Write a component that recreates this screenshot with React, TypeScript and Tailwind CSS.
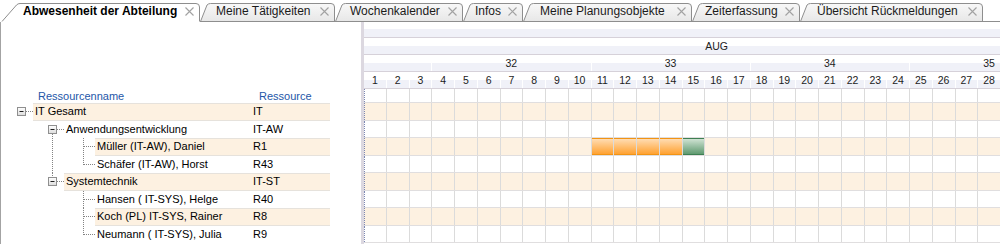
import React from "react";

type Tab = { label: string; w: number; wc: string; pl: string; active?: boolean };

const TABS: Tab[] = [
  { label: "Abwesenheit der Abteilung", w: 200, wc: "w-[200px]", pl: "pl-[23px]", active: true },
  { label: "Meine Tätigkeiten", w: 135, wc: "w-[135px]", pl: "pl-[16px]" },
  { label: "Wochenkalender", w: 128, wc: "w-[128px]", pl: "pl-[15px]" },
  { label: "Infos", w: 60, wc: "w-[60px]", pl: "pl-[12px]" },
  { label: "Meine Planungsobjekte", w: 169, wc: "w-[169px]", pl: "pl-[17px]" },
  { label: "Zeiterfassung", w: 108, wc: "w-[108px]", pl: "pl-[13px]" },
  { label: "Übersicht Rückmeldungen", w: 183, wc: "w-[183px]", pl: "pl-[17px]" },
];

type Row = {
  name: string;
  code: string;
  level: number;
  band: boolean;
  guides: boolean[];
  own: "box" | "box-down" | "box-up" | "tee" | "elbow";
  bars?: Record<number, "orange" | "green">;
};

const ROWS: Row[] = [
  { name: "IT Gesamt", code: "IT", level: 0, band: true, guides: [], own: "box" },
  { name: "Anwendungsentwicklung", code: "IT-AW", level: 1, band: false, guides: [false], own: "box-down" },
  {
    name: "Müller (IT-AW), Daniel",
    code: "R1",
    level: 2,
    band: true,
    guides: [false, true],
    own: "tee",
    bars: { 11: "orange", 12: "orange", 13: "orange", 14: "orange", 15: "green" },
  },
  { name: "Schäfer (IT-AW), Horst", code: "R43", level: 2, band: false, guides: [false, true], own: "elbow" },
  { name: "Systemtechnik", code: "IT-ST", level: 1, band: true, guides: [false], own: "box-up" },
  { name: "Hansen ( IT-SYS), Helge", code: "R40", level: 2, band: false, guides: [false, false], own: "tee" },
  { name: "Koch (PL) IT-SYS, Rainer", code: "R8", level: 2, band: true, guides: [false, false], own: "tee" },
  { name: "Neumann ( IT-SYS), Julia", code: "R9", level: 2, band: false, guides: [false, false], own: "elbow" },
];

// the month runs past the right edge, only days up to 28 are in view
const DAYS = Array.from({ length: 31 }, (_, i) => i + 1);
const WEEKS = [
  { n: "", span: 3 },
  { n: "32", span: 7 },
  { n: "33", span: 7 },
  { n: "34", span: 7 },
  { n: "35", span: 7 },
];

const dot = { stroke: "#838383", strokeWidth: 1, strokeDasharray: "1 1" };

function TabShape({ w, active, id }: { w: number; active?: boolean; id: string }) {
  const x0 = active ? 2 : 0.5;
  const s = active ? 16 : 8;
  const d = `M${x0},21.5 L${x0 + s - 1.5},5 Q${x0 + s},3.5 ${x0 + s + 2},3.5 L${w - 4},3.5 Q${w - 0.5},3.5 ${w - 0.5},7 L${w - 0.5},21.5`;
  return (
    <svg width={w} height={22} className="absolute inset-0">
      <defs>
        <linearGradient id={id} x1="0" y1="0" x2="0" y2="1">
          <stop offset="0" stopColor={active ? "#ffffff" : "#f8f8f8"} />
          <stop offset="1" stopColor={active ? "#ffffff" : "#e7e7e7"} />
        </linearGradient>
      </defs>
      <path d={d + " Z"} fill={`url(#${id})`} />
      <path d={d} fill="none" stroke="#8e8e8e" />
      {!active && <line x1={0} y1={21.5} x2={w} y2={21.5} stroke="#8e8e8e" />}
    </svg>
  );
}

function CloseX() {
  return (
    <svg width={9} height={9} className="shrink-0">
      <path d="M0.5,0.5 L8.5,8.5 M8.5,0.5 L0.5,8.5" stroke="#a2a2a2" strokeWidth={1.1} />
    </svg>
  );
}

function TabBar() {
  return (
    <div className="flex h-[22px] text-[12px] leading-none">
      {TABS.map((t, i) => (
        <div key={t.label} className={`relative h-[22px] shrink-0 ${t.wc}`}>
          <TabShape w={t.w} active={t.active} id={`tabgrad${i}`} />
          <div className={`relative flex h-[22px] items-center justify-between pr-[6px] ${t.pl}`}>
            <span className={t.active ? "font-bold text-black" : "text-[#1b1b1b]"}>{t.label}</span>
            <CloseX />
          </div>
        </div>
      ))}
      <div className="h-[22px] flex-1 border-b border-[#8e8e8e]" />
    </div>
  );
}

function Expander({ own }: { own: Row["own"] }) {
  if (own === "tee" || own === "elbow") {
    return (
      <svg width={28} height="100%" className="block shrink-0">
        <line x1={16.5} y1={0} x2={16.5} y2={own === "tee" ? "100%" : 9} {...dot} />
        <line x1={17} y1={8.5} x2={28} y2={8.5} {...dot} />
      </svg>
    );
  }
  return (
    <svg width={28} height="100%" className="block shrink-0">
      {own === "box-up" && <line x1={16.5} y1={0} x2={16.5} y2={4} {...dot} />}
      {own === "box-down" && <line x1={16.5} y1={13} x2={16.5} y2="100%" {...dot} />}
      <line x1={21} y1={8.5} x2={28} y2={8.5} {...dot} />
      <defs>
        <linearGradient id="boxg" x1="0" y1="0" x2="0" y2="1">
          <stop offset="0" stopColor="#ffffff" />
          <stop offset="1" stopColor="#dcdcdc" />
        </linearGradient>
      </defs>
      <rect x={12.5} y={4.5} width={8} height={8} fill="url(#boxg)" stroke="#8f8f8f" />
      <line x1={14.5} y1={8.5} x2={18.5} y2={8.5} stroke="#1f1f1f" />
    </svg>
  );
}

function TreePanel() {
  return (
    <div className="flex w-[360px] shrink-0 flex-col text-[11px] leading-none">
      <div className="h-[67px]" />
      <div className="flex h-[14px] items-center text-[#2456a8]">
        <span className="w-[251px] shrink-0 pl-[37px]">Ressourcenname</span>
        <span className="pl-[7px]">Ressource</span>
      </div>
      {ROWS.map((r) => {
        const bandStart = 33 + 31 * r.level;
        return (
          <div key={r.name} className="flex h-[17.5px]">
            <div className="w-[4px] shrink-0" />
            {r.guides.map((g, i) => (
              <svg key={i} width={31} height="100%" className="block shrink-0">
                {g && <line x1={16.5} y1={0} x2={16.5} y2="100%" {...dot} />}
              </svg>
            ))}
            <Expander own={r.own} />
            <div
              className={`flex items-center ${r.band ? "border-y border-[#e6e2dc] bg-[#fdf1e1]" : ""}`}
              style={{ width: 330 - bandStart }}
            >
              <span className="shrink-0 pl-[2px] text-black" style={{ width: 251 - bandStart }}>
                {r.name}
              </span>
              <span className="pl-[2px] text-black">{r.code}</span>
            </div>
          </div>
        );
      })}
    </div>
  );
}

const headBg = "bg-[linear-gradient(#ffffff_50%,#f0f1f8_50%)]";

function DataRow({ band, bars, h }: { band: boolean; bars?: Row["bars"]; h: string }) {
  return (
    <div
      className={`grid grid-cols-[repeat(31,22.75px)] border-b border-[#e0dedf] ${h} ${
        band ? "bg-[#fdf1e1]" : ""
      }`}
    >
      {DAYS.map((d) => {
        const bar = bars?.[d];
        return (
          <div
            key={d}
            className={`h-full border-r border-[#dbdbdb] ${
              d === 1 ? "border-l border-l-[#7c87b2] [border-left-style:dotted]" : ""
            }`}
          >
            {bar === "orange" && (
              <div className="h-full border-y border-[#f29414] bg-[linear-gradient(#ffdcb2,#ffa232)]" />
            )}
            {bar === "green" && (
              <div className="h-full border-y border-[#3e7f52] bg-[linear-gradient(#cfe2d2,#5f9a70)]" />
            )}
          </div>
        );
      })}
    </div>
  );
}

function GanttPanel() {
  return (
    <div className="flex-1 overflow-hidden text-[10.5px] leading-none text-[#1c1c1c]">
      <div className="w-[705.25px]">
        <div className={`h-[16px] border-b border-[#d6d1d9] ${headBg}`} />
        <div className={`flex h-[17px] items-center justify-center border-b border-[#d6d1d9] ${headBg}`}>
          AUG
        </div>
        <div className="grid h-[17px] grid-cols-[repeat(31,22.75px)] border-b border-[#d6d1d9]">
          {WEEKS.map((w, i) => (
            <div
              key={i}
              className={`flex items-center justify-center border-r border-white ${headBg} ${
                w.span === 3 ? "col-span-3" : "col-span-7"
              }`}
            >
              {w.n}
            </div>
          ))}
        </div>
        <div className="grid h-[17px] grid-cols-[repeat(31,22.75px)] border-b border-[#d6d1d9]">
          {DAYS.map((d) => (
            <div key={d} className={`flex items-center justify-center border-r border-white ${headBg}`}>
              {d <= 28 ? d : ""}
            </div>
          ))}
        </div>
        <DataRow band={false} h="h-[14px]" />
        {ROWS.map((r) => (
          <DataRow key={r.name} band={r.band} bars={r.bars} h="h-[17.5px]" />
        ))}
      </div>
    </div>
  );
}

export default function App() {
  return (
    <div className="h-[244px] w-[1000px] overflow-hidden bg-white font-['Liberation_Sans',Arial,sans-serif]">
      <TabBar />
      <div className="flex h-[222px] border-l border-[#a3a3a3]">
        <TreePanel />
        <div className="w-[3px] shrink-0 bg-[#dcd8e0]" />
        <GanttPanel />
      </div>
    </div>
  );
}
